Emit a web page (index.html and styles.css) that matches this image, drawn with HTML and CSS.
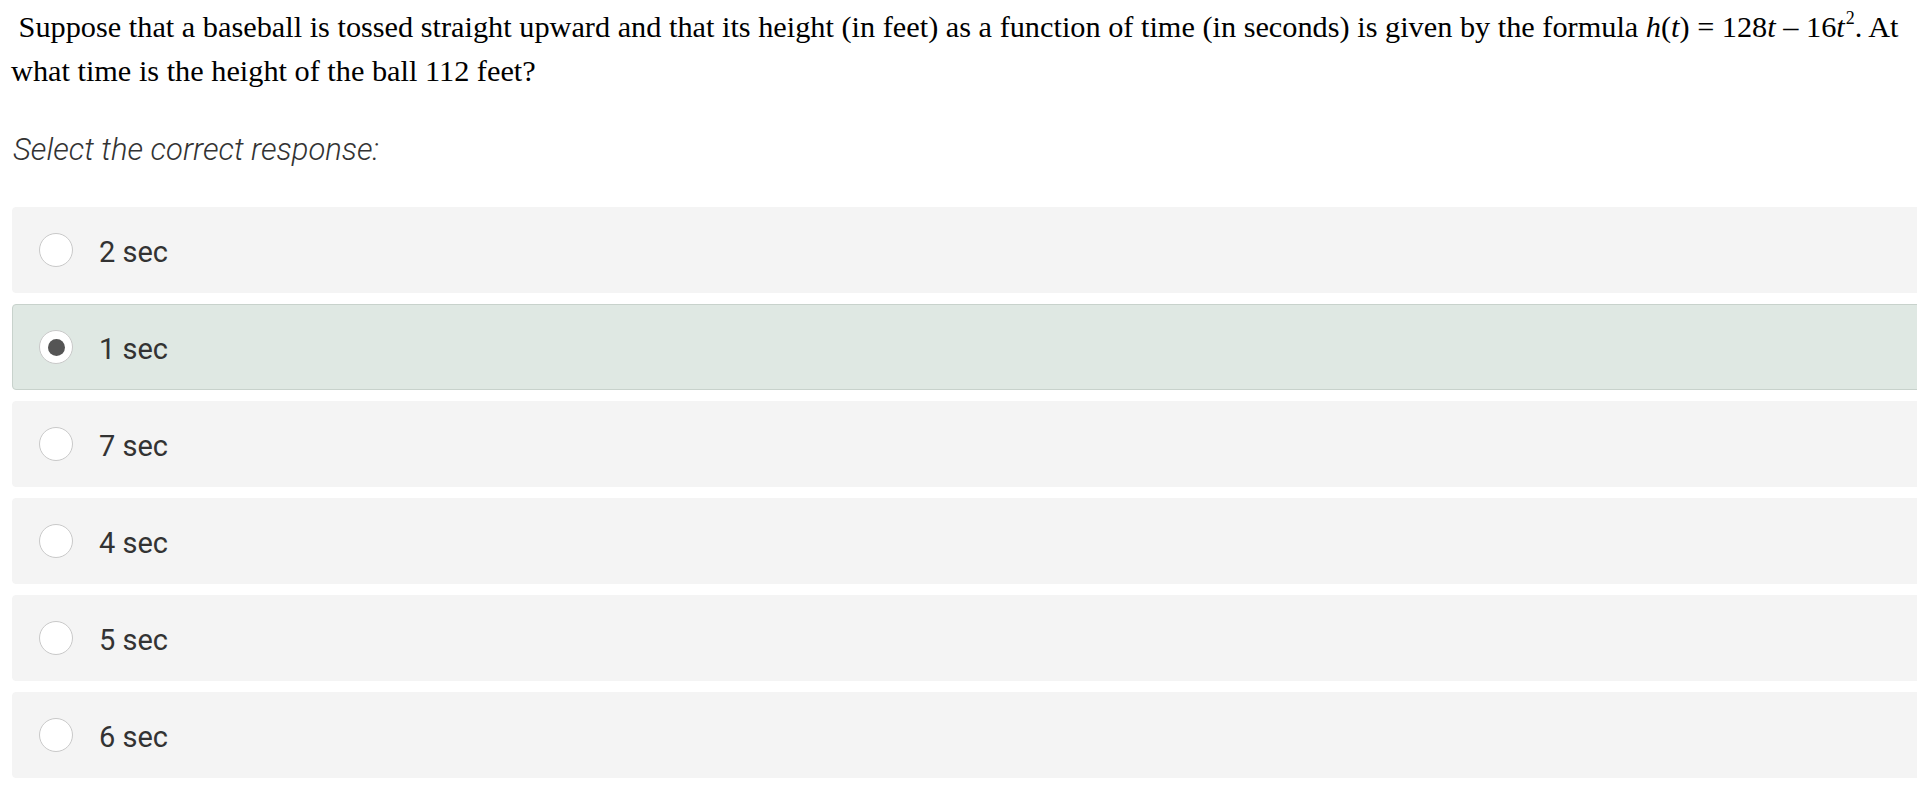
FILE: index.html
```html
<!DOCTYPE html>
<html lang="en">
<head>
  <meta charset="UTF-8" />
  <meta name="viewport" content="width=device-width, initial-scale=1.0"/>
  <title>Question</title>
  <link rel="stylesheet" href="styles.css">
</head>
<body>
  <div class="quiz">
    <p class="question">
      &nbsp;Suppose that a baseball is tossed straight upward and that its height (in feet) as a function of time (in seconds) is given by the formula <i>h</i>(<i>t</i>) = 128<i>t</i> &ndash; 16<i>t</i><sup>2</sup>. At what time is the height of the ball 112 feet?
    </p>
    <p class="prompt">Select the correct response:</p>
    <div class="options">
      <label class="option">
        <span class="radio"></span>
        <span class="label">2 sec</span>
      </label>
      <label class="option selected">
        <span class="radio"></span>
        <span class="label">1 sec</span>
      </label>
      <label class="option">
        <span class="radio"></span>
        <span class="label">7 sec</span>
      </label>
      <label class="option">
        <span class="radio"></span>
        <span class="label">4 sec</span>
      </label>
      <label class="option">
        <span class="radio"></span>
        <span class="label">5 sec</span>
      </label>
      <label class="option">
        <span class="radio"></span>
        <span class="label">6 sec</span>
      </label>
    </div>
  </div>
</body>
</html>
```

FILE: styles.css
```css
* {
  box-sizing: border-box;
}
body {
  margin: 0;
  background: #fff;
  overflow: hidden;
}
.quiz {
  padding-left: 11px;
}
.question {
  margin: 0;
  padding-top: 5px;
  font-family: "Liberation Serif", "Times New Roman", serif;
  font-size: 30.3px;
  line-height: 44px;
  color: #000;
}
.question sup {
  font-size: 18px;
  line-height: 0;
  vertical-align: 13px;
  margin-left: 1px;
}
.prompt {
  margin: 39px 0 0 2px;
  font-family: Roboto, "Liberation Sans", sans-serif;
  font-style: italic;
  font-weight: 300;
  font-size: 31px;
  line-height: 36px;
  color: #333;
}
.options {
  margin-top: 39px;
  margin-right: -20px;
}
.option {
  display: flex;
  align-items: center;
  height: 86px;
  margin: 0 0 11px 1px;
  padding-left: 26px;
  background: #f4f4f4;
  border: 1px solid #f4f4f4;
  border-radius: 4px;
  cursor: pointer;
}
.option.selected {
  background: #dfe8e3;
  border-color: #c8d2cc;
}
.radio {
  width: 34px;
  height: 34px;
  border: 1.5px solid #c9c9c9;
  border-radius: 50%;
  background: #fff;
  display: flex;
  align-items: center;
  justify-content: center;
}
.option.selected .radio::after {
  content: "";
  width: 17px;
  height: 17px;
  border-radius: 50%;
  background: #555;
}
.label {
  margin-left: 26px;
  padding-top: 4px;
  font-family: Roboto, "Liberation Sans", sans-serif;
  font-size: 29px;
  color: #333;
}
```
